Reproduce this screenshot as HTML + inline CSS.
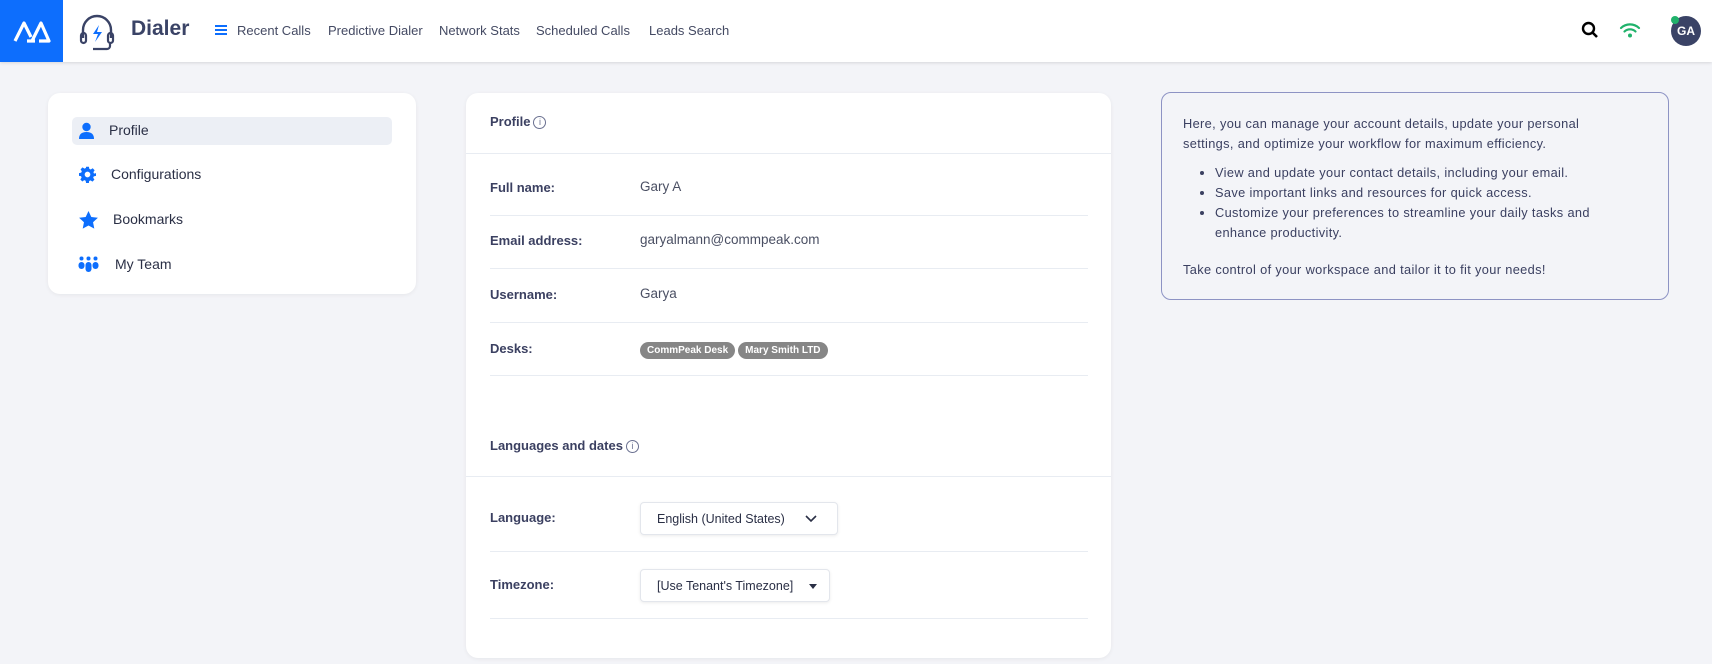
<!DOCTYPE html>
<html><head><meta charset="utf-8"><style>
*{box-sizing:border-box;margin:0;padding:0}
body{width:1712px;height:664px;overflow:hidden;background:#f3f4f8;font-family:"Liberation Sans",sans-serif;color:#3b4061;position:relative}
.a{position:absolute}
.hdr{left:0;top:0;width:1712px;height:62px;background:#fff;box-shadow:0 1px 3px rgba(0,0,0,.12)}
.nav{font-size:13px;color:#444a63;top:23px}
.card{background:#fff;border-radius:12px;box-shadow:0 1px 4px rgba(0,0,0,.06)}
.mi{font-size:14px;color:#2a2f45}
.lbl{left:490px;font-size:13px;font-weight:bold;color:#3b4061}
.val{left:640px;font-size:13.5px;color:#4a4f63}
.hr{left:490px;width:598px;height:1px;background:#e8ecf2}
.tag{display:inline-block;background:#868686;color:#fff;font-size:10px;font-weight:bold;border-radius:9px;padding:3px 7px;margin-right:3px}
.sel{background:#fff;border:1px solid #e3e6ec;border-radius:4px;box-shadow:0 1px 3px rgba(0,0,0,.08);font-size:12.5px;color:#2a2f45;overflow:hidden}
.info{display:inline-block;width:13px;height:13px;border:1px solid #6a7090;border-radius:50%;font-size:9px;text-align:center;line-height:11px;font-weight:normal;color:#6a7090;vertical-align:1px;margin-left:3px}
</style></head><body>
<div class="a hdr"></div>
<div class="a" style="left:0;top:0;width:63px;height:62px;background:#0d6efd"></div>
<svg class="a" style="left:13px;top:17px" width="38" height="28" viewBox="0 0 38 28"><path d="M2 24 L11 6 L18 20 M14 24 H22 M19 24 L28 6 L36 24 H26" fill="none" stroke="#fff" stroke-width="3.2" stroke-linejoin="round"/></svg>
<svg class="a" style="left:79px;top:12px" width="36" height="40" viewBox="0 0 36 40"><path d="M4 26 V18 A14 14 0 0 1 32 18 V26" fill="none" stroke="#3a4366" stroke-width="2.4"/><rect x="2" y="21" width="5" height="10" rx="2.5" fill="none" stroke="#3a4366" stroke-width="2.2"/><rect x="29" y="21" width="5" height="10" rx="2.5" fill="none" stroke="#3a4366" stroke-width="2.2"/><path d="M31 31 V34 A3 3 0 0 1 28 37 H14" fill="none" stroke="#3a4366" stroke-width="2.2"/><path d="M20 13 L14 22 H19 L16 30 L23 20 H18 Z" fill="#0d6efd"/></svg>
<div class="a" style="left:131px;top:17px;font-size:21px;font-weight:bold;color:#3a4366">Dialer</div>
<div class="a" style="left:215px;top:25px;width:12px;height:2px;background:#0d6efd;box-shadow:0 4px 0 #0d6efd,0 8px 0 #0d6efd"></div>
<div class="a nav" style="left:237px">Recent Calls</div>
<div class="a nav" style="left:328px">Predictive Dialer</div>
<div class="a nav" style="left:439px">Network Stats</div>
<div class="a nav" style="left:536px">Scheduled Calls</div>
<div class="a nav" style="left:649px">Leads Search</div>
<svg class="a" style="left:1581px;top:21px" width="18" height="18" viewBox="0 0 18 18"><circle cx="7.5" cy="7.5" r="5.5" fill="none" stroke="#000" stroke-width="2.4"/><path d="M11.5 11.5 L16 16" stroke="#000" stroke-width="2.6"/></svg>
<svg class="a" style="left:1619px;top:21px" width="22" height="18" viewBox="0 0 22 18"><path d="M2 7 A13 13 0 0 1 20 7 M5.5 10.5 A8 8 0 0 1 16.5 10.5" fill="none" stroke="#20b26b" stroke-width="2.2" stroke-linecap="round"/><circle cx="11" cy="14.5" r="2" fill="#20b26b"/></svg>
<div class="a" style="left:1671px;top:16px;width:30px;height:30px;border-radius:50%;background:#3a4366;color:#fff;font-size:12px;font-weight:bold;text-align:center;line-height:30px">GA</div>
<div class="a" style="left:1671px;top:16px;width:8px;height:8px;border-radius:50%;background:#20b26b"></div>

<div class="a card" style="left:48px;top:93px;width:368px;height:201px"></div>
<div class="a" style="left:72px;top:117px;width:320px;height:28px;background:#eceff5;border-radius:5px"></div>
<svg class="a" style="left:78px;top:122px" width="17" height="18" viewBox="0 0 17 18"><circle cx="8.5" cy="5" r="4.2" fill="#0d6efd"/><path d="M1 17 Q1 10 8.5 10 Q16 10 16 17 Z" fill="#0d6efd"/></svg>
<div class="a mi" style="left:109px;top:122px">Profile</div>
<svg class="a" style="left:79px;top:166px" width="17" height="17" viewBox="0 0 24 24"><path fill="#0d6efd" d="M10 1h4l.6 3.1 2 .9 2.7-1.8 2.8 2.8-1.8 2.7.9 2L24 10v4l-3.1.6-.9 2 1.8 2.7-2.8 2.8-2.7-1.8-2 .9L14 24h-4l-.6-3.1-2-.9-2.7 1.8-2.8-2.8 1.8-2.7-.9-2L0 14v-4l3.1-.6.9-2-1.8-2.7 2.8-2.8 2.7 1.8 2-.9z"/><circle cx="12" cy="12" r="4" fill="#fff"/></svg>
<div class="a mi" style="left:111px;top:166px">Configurations</div>
<svg class="a" style="left:79px;top:211px" width="19" height="18" viewBox="0 0 24 23"><path fill="#0d6efd" d="M12 0l3.6 7.6 8.4 1-6.2 5.7 1.6 8.3L12 18.5 4.6 22.6l1.6-8.3L0 8.6l8.4-1z"/></svg>
<div class="a mi" style="left:113px;top:211px">Bookmarks</div>
<svg class="a" style="left:78px;top:256px" width="21" height="16" viewBox="0 0 21 16"><g fill="#0d6efd"><circle cx="3.5" cy="2.5" r="2"/><circle cx="10.5" cy="2.5" r="2"/><circle cx="17.5" cy="2.5" r="2"/><rect x="0.5" y="6" width="6" height="7" rx="3"/><rect x="14.5" y="6" width="6" height="7" rx="3"/><rect x="7.5" y="6" width="6" height="10" rx="3"/></g></svg>
<div class="a mi" style="left:115px;top:256px">My Team</div>

<div class="a card" style="left:466px;top:93px;width:645px;height:565px"></div>
<div class="a" style="left:490px;top:114px;font-size:13px;font-weight:bold">Profile<span class="info">i</span></div>
<div class="a" style="left:466px;top:153px;width:645px;height:1px;background:#e8ecf2"></div>
<div class="a lbl" style="top:180px">Full name:</div><div class="a val" style="top:179px">Gary A</div>
<div class="a hr" style="top:215px"></div>
<div class="a lbl" style="top:233px">Email address:</div><div class="a val" style="top:232px">garyalmann@commpeak.com</div>
<div class="a hr" style="top:268px"></div>
<div class="a lbl" style="top:287px">Username:</div><div class="a val" style="top:286px">Garya</div>
<div class="a hr" style="top:322px"></div>
<div class="a lbl" style="top:341px">Desks:</div><div class="a" style="left:640px;top:340px"><span class="tag">CommPeak Desk</span><span class="tag">Mary Smith LTD</span></div>
<div class="a hr" style="top:375px"></div>
<div class="a" style="left:490px;top:438px;font-size:13px;font-weight:bold">Languages and dates<span class="info">i</span></div>
<div class="a" style="left:466px;top:476px;width:645px;height:1px;background:#e8ecf2"></div>
<div class="a lbl" style="top:510px">Language:</div>
<div class="a sel" style="left:640px;top:502px;width:198px;height:33px"><span class="a" style="left:16px;top:9px;width:135px;overflow:hidden;white-space:nowrap">English (United States)</span><svg class="a" style="left:164px;top:12px" width="12" height="8" viewBox="0 0 12 8"><path d="M1 1 L6 6 L11 1" fill="none" stroke="#2a2f45" stroke-width="1.6"/></svg></div>
<div class="a hr" style="top:551px"></div>
<div class="a lbl" style="top:577px">Timezone:</div>
<div class="a sel" style="left:640px;top:569px;width:190px;height:33px"><span class="a" style="left:16px;top:9px">[Use Tenant's Timezone]</span><svg class="a" style="left:168px;top:14px" width="8" height="5" viewBox="0 0 8 5"><path d="M0 0 H8 L4 5Z" fill="#2a2f45"/></svg></div>
<div class="a hr" style="top:618px"></div>

<div class="a" style="left:1161px;top:92px;width:508px;height:208px;border:1px solid #8d93c4;border-radius:10px;font-size:12.8px;line-height:20px;letter-spacing:0.35px;color:#3b4061;padding:21px 40px 21px 21px">
<div>Here, you can manage your account details, update your personal settings, and optimize your workflow for maximum efficiency.</div>
<ul style="margin:9px 0 17px 32px">
<li>View and update your contact details, including your email.</li>
<li>Save important links and resources for quick access.</li>
<li>Customize your preferences to streamline your daily tasks and enhance productivity.</li>
</ul>
<div>Take control of your workspace and tailor it to fit your needs!</div>
</div>
</body></html>
